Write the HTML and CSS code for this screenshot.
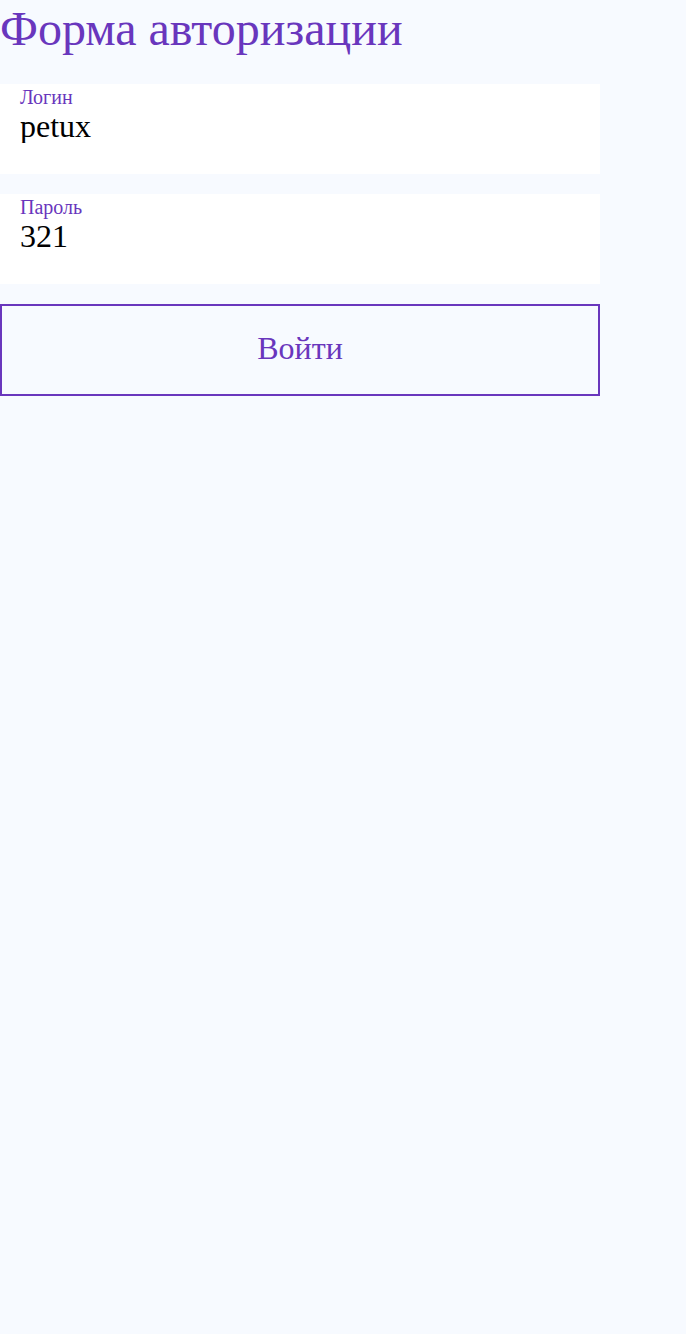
FILE: index.html
```html
<!DOCTYPE html>
<html lang="ru">
<head>
<meta charset="utf-8">
<link rel="stylesheet" href="styles.css">
</head>
<body>
<div class="page">
  <h1 class="title">Форма авторизации</h1>
  <form class="form">
    <label class="field">
      <span class="field-label">Логин</span>
      <input class="field-input" type="text" value="petux">
    </label>
    <label class="field">
      <span class="field-label">Пароль</span>
      <input class="field-input" type="text" value="321">
    </label>
    <button class="submit" type="button">Войти</button>
  </form>
</div>
</body>
</html>
```
FILE: styles.css
```css
html, body {
  margin: 0;
  padding: 0;
  background: #f7faff;
  font-family: "Liberation Serif", "Times New Roman", serif;
}
.page {
  width: 600px;
  min-height: 1334px;
}
.title {
  margin: 0 0 27px 0;
  font-size: 48px;
  font-weight: normal;
  line-height: 57px;
  color: #6936bd;
}
.form {
  display: flex;
  flex-direction: column;
  gap: 20px;
}
.field {
  display: flex;
  flex-direction: column;
  height: 90px;
  box-sizing: border-box;
  padding: 2px 20px 0 20px;
  background: #ffffff;
}
.field-label {
  font-size: 20px;
  line-height: 23px;
  color: #6936bd;
}
.field-input {
  border: none;
  outline: none;
  padding: 0;
  margin: 0;
  background: transparent;
  font-family: "Liberation Serif", "Times New Roman", serif;
  font-size: 32px;
  line-height: 34px;
  height: 34px;
  color: #000;
}
.submit {
  height: 92px;
  border: 2px solid #6936bd;
  background: transparent;
  color: #6936bd;
  font-family: "Liberation Serif", "Times New Roman", serif;
  font-size: 32px;
  padding: 0 0 4px 0;
  margin: 0;
}
```
